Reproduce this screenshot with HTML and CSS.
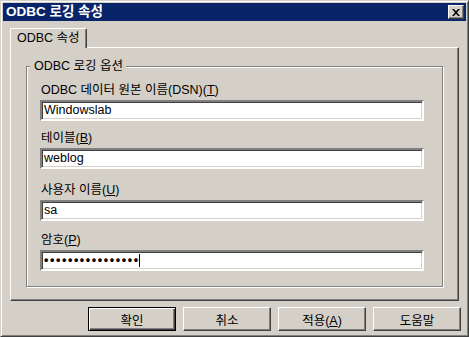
FILE: index.html
```html
<!DOCTYPE html>
<html lang="ko">

<head>
  <meta charset="UTF-8">
  <title>ODBC 로깅 속성</title>
  <link rel="stylesheet" href="styles.css">
</head>

<body>
  <div class="window">
    <div class="titlebar">
      <span class="title">ODBC 로깅 속성</span>
      <button class="close" aria-label="닫기">
        <svg width="8" height="7" viewBox="0 0 8 7">
          <path d="M0 0h2l2 2.2L6 0h2L5 3.5 8 7H6L4 4.8 2 7H0l3-3.5z" fill="#000"/>
        </svg>
      </button>
    </div>

    <div class="content">
      <div class="tabs">
        <div class="tab active">ODBC 속성</div>
      </div>
      <div class="panel">
        <div class="group">
          <span class="group-title">ODBC 로깅 옵션</span>
          <div class="field">
            <label>ODBC 데이터 원본 이름(DSN)(<u>T</u>)</label>
            <div class="edit">Windowslab</div>
          </div>
          <div class="field">
            <label>테이블(<u>B</u>)</label>
            <div class="edit">weblog</div>
          </div>
          <div class="field">
            <label>사용자 이름(<u>U</u>)</label>
            <div class="edit">sa</div>
          </div>
          <div class="field">
            <label>암호(<u>P</u>)</label>
            <div class="edit password">••••••••••••••••<span class="caret"></span></div>
          </div>
        </div>
      </div>

      <div class="buttons">
        <button class="btn default">확인</button>
        <button class="btn">취소</button>
        <button class="btn">적용(<u>A</u>)</button>
        <button class="btn">도움말</button>
      </div>
    </div>
  </div>
</body>
</html>
```

FILE: styles.css
```css
* {
  box-sizing: border-box;
}

body {
  margin: 0;
  background: #d4d0c8;
  font-family: "Liberation Sans", "Noto Sans CJK KR", sans-serif;
  font-size: 12.5px;
  color: #000;
}

.window {
  width: 469px;
  height: 337px;
  padding: 2px;
  background: #d4d0c8;
  border: 1px solid;
  border-color: #d4d0c8 #404040 #404040 #d4d0c8;
  box-shadow: inset 1px 1px #fff, inset -1px -1px #808080;
}

/* title bar */
.titlebar {
  display: flex;
  align-items: center;
  justify-content: space-between;
  height: 18px;
  padding: 0 2px 0 3px;
  background: #0a246a;
}

.title {
  color: #fff;
  font-size: 13.5px;
  font-weight: bold;
  line-height: 18px;
}

.close {
  display: flex;
  align-items: center;
  justify-content: center;
  width: 16px;
  height: 14px;
  padding: 0;
  background: #d4d0c8;
  border: 1px solid;
  border-color: #fff #404040 #404040 #fff;
  box-shadow: inset -1px -1px #808080;
}

.content {
  padding: 7px 0 0 7px;
}

/* tab */
.tabs {
  display: flex;
  height: 19px;
  position: relative;
  z-index: 1;
}

.tab {
  padding: 0 6px 0 6px;
  line-height: 18px;
  background: #d4d0c8;
  border-top: 1px solid #fff;
  border-left: 1px solid #fff;
  border-right: 1px solid #404040;
  box-shadow: inset -1px 0 #808080;
  border-radius: 2px 2px 0 0;
}

.tab.active {
  height: 20px;
}

.panel {
  width: 449px;
  height: 254px;
  background: #d4d0c8;
  border: 1px solid;
  border-color: #fff #404040 #404040 #fff;
  box-shadow: inset -1px -1px #808080;
  padding: 18px 15px 0;
}

/* group box */
.group {
  position: relative;
  height: 221px;
  padding: 15px 18px 0 13px;
  border: 1px solid #808080;
  box-shadow: inset 1px 1px #fff, 1px 1px #fff;
}

.group-title {
  position: absolute;
  top: -9px;
  left: 3px;
  padding: 0 3px 0 4px;
  line-height: 16px;
  background: #d4d0c8;
}

.field label {
  display: block;
  line-height: 16px;
  margin-bottom: 2px;
  padding-left: 1px;
}

.field:nth-child(3) {
  margin-top: 9px;
}

.field:nth-child(4) {
  margin-top: 13px;
}

.field:nth-child(5) {
  margin-top: 11px;
}

.edit {
  height: 21px;
  padding: 0 2px;
  line-height: 17px;
  background: #fff;
  border: 2px solid;
  border-color: #808080 #fff #fff #808080;
  box-shadow: inset 1px 1px #404040, inset -1px -1px #d4d0c8;
  white-space: nowrap;
}

.edit.password {
  display: flex;
  align-items: center;
  letter-spacing: 1.6px;
  font-weight: bold;
}

.caret {
  display: inline-block;
  width: 1px;
  height: 13px;
  margin-left: -1px;
  background: #000;
}

/* buttons */
.buttons {
  display: flex;
  gap: 7px;
  margin-top: 6px;
  padding-left: 78px;
}

.btn {
  width: 88px;
  height: 24px;
  padding: 0;
  font: inherit;
  background: #d4d0c8;
  border: 1px solid;
  border-color: #fff #404040 #404040 #fff;
  box-shadow: inset -1px -1px #808080;
}

.btn.default {
  border: 1px solid #000;
  box-shadow: inset 1px 1px #fff, inset -1px -1px #404040, inset -2px -2px #808080;
}
```
